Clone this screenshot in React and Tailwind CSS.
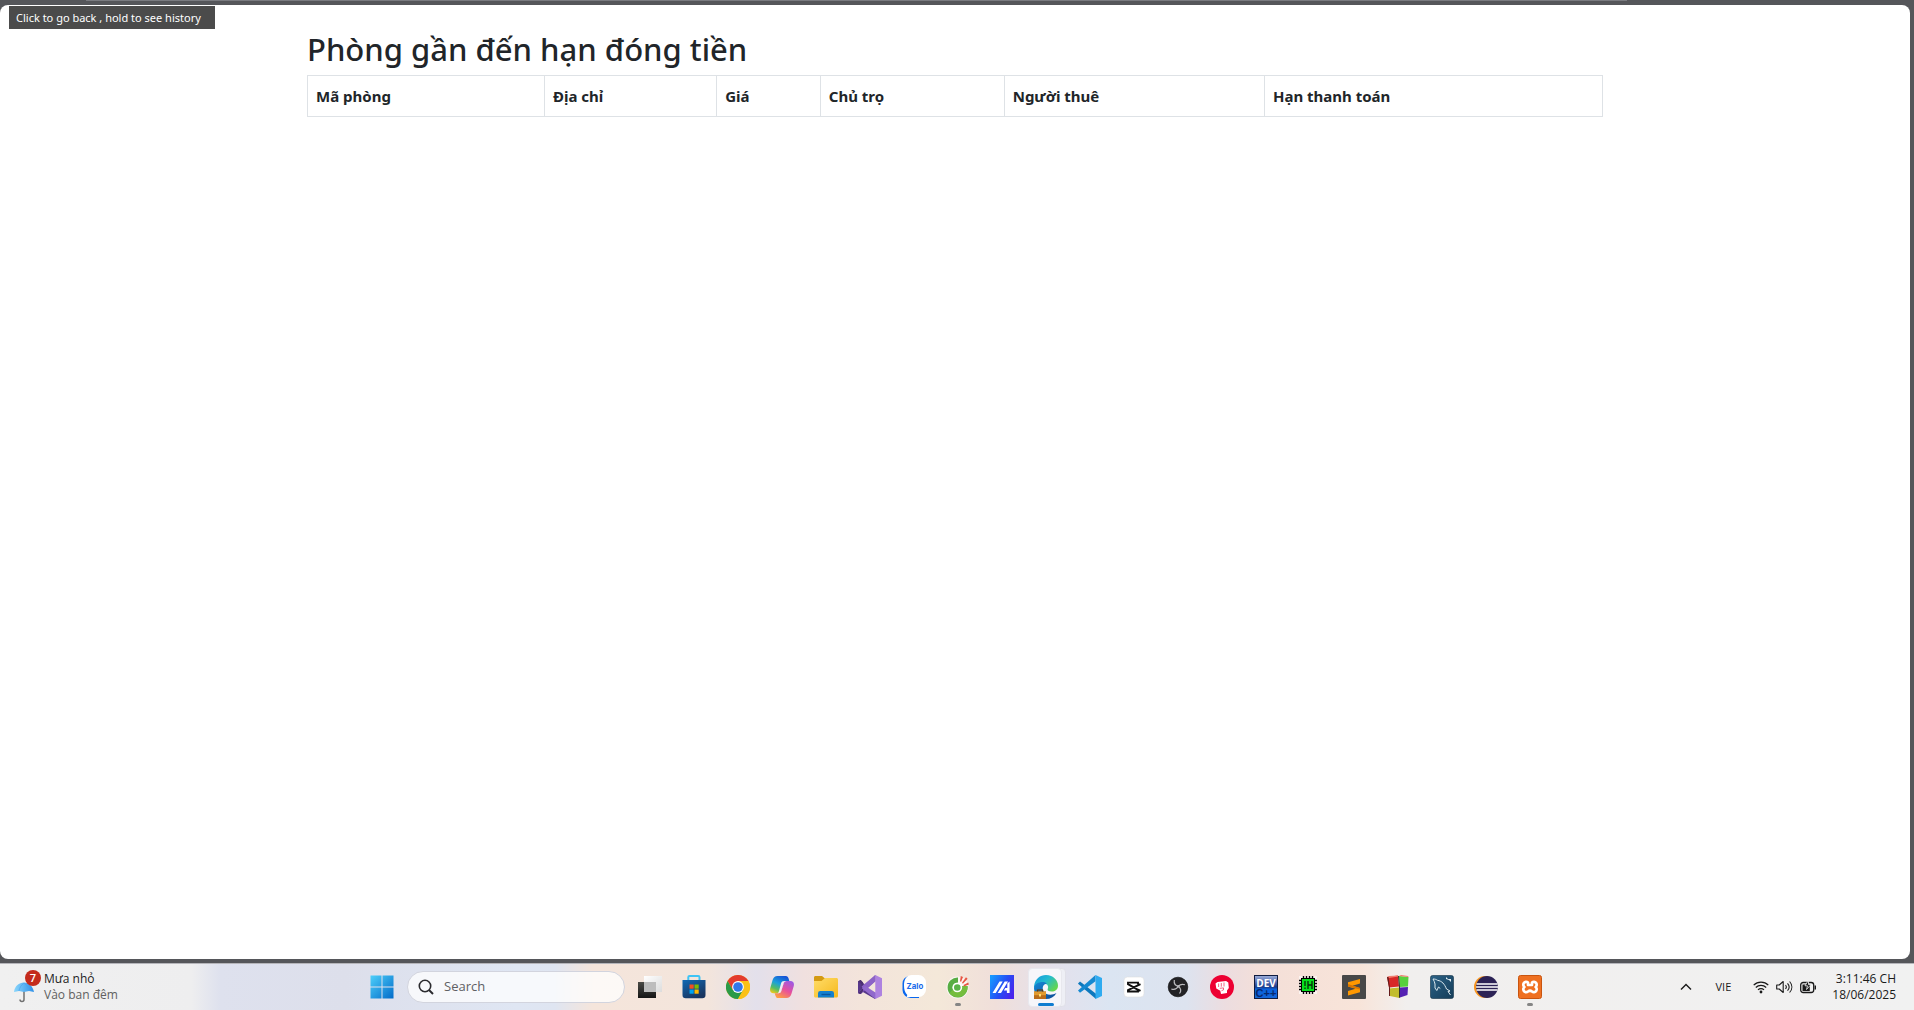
import React from "react";

const TaskViewIcon = () => (
  <svg viewBox="0 0 24 24" className="size-6">
    <defs>
      <linearGradient id="tvDark" x1="0" y1="0" x2="0" y2="1"><stop offset="0" stopColor="#4a4a46" /><stop offset="1" stopColor="#151515" /></linearGradient>
      <linearGradient id="tvLight" x1="0" y1="0" x2="1" y2="1"><stop offset="0" stopColor="#ffffff" /><stop offset="1" stopColor="#dcdcdc" /></linearGradient>
    </defs>
    <rect x="0" y="7" width="18" height="16" fill="url(#tvDark)" />
    <rect x="6" y="1" width="18" height="16" fill="url(#tvLight)" />
    <rect x="6" y="7" width="12" height="10" fill="#bdbdbd" />
  </svg>
);

const StoreIcon = () => (
  <svg viewBox="0 0 24 24" className="size-6">
    <defs><linearGradient id="store" x1="0" y1="0" x2="0.6" y2="1"><stop offset="0" stopColor="#1169b4" /><stop offset="1" stopColor="#19355f" /></linearGradient></defs>
    <path d="M6.300 6V2.300A1.300 1.300 0 0 1 7.600 1h8.600a1.300 1.300 0 0 1 1.300 1.300V6" fill="none" stroke="#3fc4f5" strokeWidth="2" />
    <path d="M.5 5h23v15a3.200 3.200 0 0 1-3.200 3.200H3.700A3.200 3.200 0 0 1 .5 20z" fill="url(#store)" />
    <rect x="7.500" y="9.500" width="4.200" height="4.200" fill="#f25022" />
    <rect x="12.500" y="9.500" width="4.200" height="4.200" fill="#7fba00" />
    <rect x="7.500" y="14.500" width="4.200" height="4.200" fill="#00a4ef" />
    <rect x="12.500" y="14.500" width="4.200" height="4.200" fill="#ffb900" />
  </svg>
);

const ChromeIcon = () => (
  <svg viewBox="0 0 24 24" className="size-6">
    <circle cx="12" cy="12" r="12" fill="#fbc116" />
    <path d="M12 6H22.400A12 12 0 0 0 1.600 6L6.800 15z" fill="#e33b2e" />
    <path d="M1.600 6A12 12 0 0 0 12 24l5.200-9H12L6.800 15z" fill="#2a9a48" />
    <path d="M22.400 6A12 12 0 0 1 12 24l5.200-9A6 6 0 0 0 12 6z" fill="#fbc116" />
    <circle cx="12" cy="12" r="5.900" fill="#fff" />
    <circle cx="12" cy="12" r="4.800" fill="#3277e8" />
  </svg>
);

const CopilotIcon = () => (
  <svg viewBox="0 0 24 24" className="size-6">
    <defs>
      <linearGradient id="cpA" x1="0.700" y1="0" x2="0.200" y2="1"><stop offset="0" stopColor="#1754d6" /><stop offset="0.450" stopColor="#1aa0dc" /><stop offset="0.750" stopColor="#55bd62" /><stop offset="1" stopColor="#ecc91c" /></linearGradient>
      <linearGradient id="cpB" x1="0.800" y1="0" x2="0.200" y2="1"><stop offset="0" stopColor="#9d59e5" /><stop offset="0.500" stopColor="#e8509b" /><stop offset="1" stopColor="#ffa23e" /></linearGradient>
    </defs>
    <path d="M7.500 1h8.400c1.500 0 2.200.9 2.700 2.600L19.300 6h-2.700c-1.700 0-2.500.9-3 2.500l-2.300 7.600c-.5 1.500-1.300 2.200-2.900 2.200H3.600c-3 0-4.100-2.400-3.300-5.200l2.300-8C3.500 2.300 5 1 7.500 1z" fill="url(#cpA)" />
    <path d="M16.500 23H8.100c-1.500 0-2.200-.9-2.700-2.600l-.7-2.100h3.700c1.600 0 2.400-.7 2.900-2.200l2.300-7.600c.5-1.600 1.300-2.500 3-2.500h3.800c3 0 4.100 2.400 3.300 5.200l-2.300 7.700c-.9 2.800-2.400 4.100-4.900 4.100z" fill="url(#cpB)" />
    <path d="M13.600 8.500c.5-1.600 1.300-2.500 3-2.500h-2.200c-1.900 0-2.800.8-3.300 2.200L9 16c-.4 1.500-.9 2.300-2.100 2.300h1.500c1.600 0 2.400-.7 2.900-2.200z" fill="#f5e7f1" />
  </svg>
);

const ExplorerIcon = () => (
  <svg viewBox="0 0 24 24" className="size-6">
    <defs><linearGradient id="folder" x1="0" y1="0" x2="1" y2="1"><stop offset="0" stopColor="#ffdc68" /><stop offset="1" stopColor="#f5b91e" /></linearGradient></defs>
    <path d="M0 6V2.500C0 1.600.6 1 1.500 1H8l3 2.500V6z" fill="#d49a12" />
    <path d="M0 6h7.500L11 3h11.500c.9 0 1.500.6 1.500 1.500V21c0 .9-.6 1.500-1.500 1.500h-21C.6 22.500 0 21.900 0 21z" fill="url(#folder)" />
    <path d="M4 22.500v-4.200A2.300 2.300 0 0 1 6.300 16h11.400a2.300 2.300 0 0 1 2.300 2.300v4.200z" fill="#1380cf" />
    <path d="M7.500 19.500h9" stroke="#07569e" strokeWidth="1.400" />
  </svg>
);

const VisualStudioIcon = () => (
  <svg viewBox="0 0 24 24" className="size-6">
    <path d="M0 6.300 2.700 5 17 21.500V24L4 16.500 1.500 19 0 18z" fill="#57378a" />
    <path d="M0 18 17.300 0v6L3 19z" fill="#7a4fb4" />
    <path d="M0 6.300 2.700 5 5 7.500V16l-2.300 3L0 18l3.500-3V9z" fill="#4b3070" />
    <path d="M17.300 0 24 3.300v17.400L17.300 24l-5.500-8 5.500 1.500V6.500z" fill="#ae82e0" />
    <path d="M17.300 0v6.500L7 15.500l-3.500-4z" fill="#8c62c7" />
    <path d="m7.500 11 9.800 6.500V24L3.500 13z" fill="#9169cc" />
  </svg>
);

const ZaloIcon = () => (
  <svg viewBox="0 0 24 24" className="size-6">
    <path d="M7 1h10v22H9a8 8 0 0 1-8.500-8V8.500A8 8 0 0 1 7 1z" fill="#0867ef" />
    <path d="M10 0h6.500A7.500 7.500 0 0 1 24 7.500v7a7.500 7.500 0 0 1-7.500 7.500H9l-4.500.5.8-2.500C2.800 17.500 2 14.500 2 10.500 2 4.500 4.500 0 10 0z" fill="#fff" />
    <text x="4.600" y="14" fontSize="7.800" fontWeight="700" fontFamily="Inter, sans-serif" fill="#1769ea">Zalo</text>
  </svg>
);

const CocCocIcon = () => (
  <svg viewBox="0 0 24 24" className="size-6">
    <circle cx="11.500" cy="12.500" r="11" fill="#fff" opacity=".65" />
    <path d="M12 2.500A10 10 0 1 0 21.500 11h-5.200A5 5 0 1 1 12 7.700z" fill="#57ad43" />
    <path d="M3.500 18A10 10 0 0 0 21.500 11h-5.200c.2 5-5.800 7-8.800 3z" fill="#75bd3d" />
    <circle cx="11.300" cy="12.500" r="4.800" fill="#fff" />
    <circle cx="11.300" cy="12.500" r="3.300" fill="#59b348" />
    <path d="m14 6 .8-5L17 2l-2 5zm2 1.800L20 2.200l1.600 1.600-4.700 5zm1.500 2.300 4.700-2.600.7 1.900-5 2z" fill="#e75542" />
  </svg>
);

const ArmouryIcon = () => (
  <svg viewBox="0 0 24 24" className="size-6">
    <defs><linearGradient id="asus" x1="0" y1="0.200" x2="1" y2="0.700"><stop offset="0" stopColor="#1798ff" /><stop offset="0.550" stopColor="#264df4" /><stop offset="1" stopColor="#4a24ec" /></linearGradient></defs>
    <path d="M0 0h24v24H0z" fill="url(#asus)" />
    <path d="M2.500 18 9.500 6.500h3.200L5.700 18zM7.700 18 14.700 6.500H18L11 18z" fill="#fff" />
    <path d="m17.300 8.500 2.300-2V18h-2.700v-2.600H13.800l1.500-2.500h2z" fill="#fff" />
  </svg>
);

const EdgeIcon = () => (
  <svg viewBox="0 0 24 24" className="size-6">
    <defs>
      <linearGradient id="edgeTop" x1="0" y1="0" x2="1" y2="0.700"><stop offset="0" stopColor="#1597df" /><stop offset="0.500" stopColor="#23bbd0" /><stop offset="1" stopColor="#65d64b" /></linearGradient>
      <linearGradient id="edgeLow" x1="0" y1="0" x2="1" y2="1"><stop offset="0" stopColor="#1689d7" /><stop offset="1" stopColor="#0c4a93" /></linearGradient>
    </defs>
    <path d="M0 11C1.500 3.500 6 0 12 0c7.500 0 12 5.500 12 10.500 0 4-3 6-6.300 6-3.200 0-4.700-1.300-4-2.500.9-1.500.8-5.500-4.200-5.500C5 8.500 1 10.500 0 14z" fill="url(#edgeTop)" />
    <path d="M0 13c.5-4 4.500-6 8.500-6 2 0 3.500.7 4.300 1.700C9 9 8 12.500 9.300 15.500c2 4.500 8 5.500 13.200 2.500C20 22 16.500 24 12 24 5 24 0 19 0 13z" fill="url(#edgeLow)" />
    <path d="M0 16.500h12V24H0z" fill="#b96c18" />
    <path d="M0 16.500h12v3.700H0z" fill="#e19a2e" />
    <path d="M3.500 16.500V15h5v1.500" fill="none" stroke="#65390b" strokeWidth="1.200" />
    <path d="M5 19h2v2.500H5z" fill="#ffdf72" />
  </svg>
);

const VSCodeIcon = () => (
  <svg viewBox="0 0 24 24" className="size-6">
    <path d="M0 8.500 2 6.500 18 18.800V24L.3 9z" fill="#0d78bd" />
    <path d="M0 15.500 17.500 0v6.300L2 17.800z" fill="#1689d1" />
    <path d="M17.500 0 24 3v18l-6.500 3z" fill="#2fabf0" />
  </svg>
);

const CapCutIcon = () => (
  <svg viewBox="0 0 24 24" className="size-6">
    <rect x="2" y="2" width="20" height="20" rx="3.500" fill="#fff" stroke="#dedede" strokeWidth=".6" />
    <path d="M18.500 9.200 6 15.200v1.300h10v-1.700L6 9.200V7.600h10v1.600M16 14.500l2.500 1.400" fill="none" stroke="#101010" strokeWidth="1.900" />
  </svg>
);

const ObsIcon = () => (
  <svg viewBox="0 0 24 24" className="size-6">
    <circle cx="12" cy="12" r="9.800" fill="#232326" stroke="#111" strokeWidth=".7" />
    <path d="M8.300 5c-.5 3.300.8 5.600 4 6.300M19 9.800c-2.800-1-5-.5-6.700 1.500M13.500 18.500c1.800-2.300 1.500-5-1.200-7.200M12.300 11.300c-1.600 3-3.900 3.800-7 2.700" fill="none" stroke="#b9b9bc" strokeWidth="1.200" />
    <circle cx="12.300" cy="11.300" r="1.200" fill="#b9b9bc" />
  </svg>
);

const FistIcon = () => (
  <svg viewBox="0 0 24 24" className="size-6">
    <circle cx="12" cy="12" r="12" fill="#ed0032" />
    <path d="M5.500 8.500 7.500 7l8.500-1 2.300 1.500.5 5.500-1.800 2.500V18l-6 1-.7-3.200-4-2.300z" fill="#fff" />
    <path d="M8.600 8.500v3.500m2.700-4v3.700m2.700-4.200v4m-4.200 1.800 3.700-.4v2l-2 .8" stroke="#ed0032" strokeWidth=".6" fill="none" />
  </svg>
);

const DevCppIcon = () => (
  <svg viewBox="0 0 24 24" className="size-6">
    <defs><linearGradient id="dev" x1="0" y1="0" x2="0" y2="1"><stop offset="0" stopColor="#9fb0da" /><stop offset="0.350" stopColor="#3f5aa5" /><stop offset="0.500" stopColor="#1c3a86" /><stop offset="0.600" stopColor="#0a62dd" /><stop offset="1" stopColor="#1465d8" /></linearGradient></defs>
    <rect x=".5" y=".5" width="23" height="23" fill="url(#dev)" stroke="#101c40" />
    <text x="12" y="11.500" textAnchor="middle" fontSize="10" fontWeight="700" fontFamily="Open Sans, sans-serif" fill="#fff">DEV</text>
    <text x="12" y="21.500" textAnchor="middle" fontSize="11" fontWeight="700" fontFamily="Liberation Sans, sans-serif" fill="#07276c">C++</text>
  </svg>
);

const ChipIcon = () => (
  <svg viewBox="0 0 24 24" className="size-6">
    <path d="M1 1h18v18H1z" fill="#fff" opacity=".6" />
    <path d="M5.500 1v18M8.500 1v18M11.500 1v18M14.500 1v18M1 5.500h18M1 8.500h18M1 11.500h18M1 14.500h18" stroke="#000" strokeWidth="1.400" />
    <path d="M3 3h14v14H3z" fill="#000" />
    <path d="M4 4h12v12H4z" fill="#06df1c" />
    <path d="M7 6v5m0 1.500V14M10 6v8M14 6v8M10 10h4" stroke="#052d08" strokeWidth="1.300" />
  </svg>
);

const SublimeIcon = () => (
  <svg viewBox="0 0 24 24" className="size-6">
    <rect width="24" height="24" rx="1" fill="#484848" />
    <path d="M18 4v4.500l-7.500 2.300L18 13v4.300L6 20.500V16l7.500-2.300L6 11.500V7.300z" fill="#ff9800" />
    <path d="m6 9 12 4v1.500L6 11.500z" fill="#d87500" />
  </svg>
);

const CodeBlocksIcon = () => (
  <svg viewBox="0 0 24 24" className="size-6">
    <path d="m1 2 11-1.500 1 11L3 12.500z" fill="#d82727" />
    <path d="m13 1 9.500 1-.5 9.500-8.500.5z" fill="#57cf3e" />
    <path d="m3 13.500 10-1 .5 10.500L4 21z" fill="#c2bd2d" />
    <path d="m14 12.500 8-.5-.5 8-7.500 2.500z" fill="#5420b2" />
    <path d="M1 2 3 1l9-.5.5 1L3 3zM13 1l2-1 7 1 .5 1z" fill="#f07b6d" />
    <path d="m1 2 2 10.500V21h1v-8L2.500 2z" fill="#641b1b" />
    <path d="M12 1h1l1 11v10.500l-1 .5V12z" fill="#303030" />
  </svg>
);

const MySqlIcon = () => (
  <svg viewBox="0 0 24 24" className="size-6">
    <defs><linearGradient id="mysql" x1="0" y1="0" x2="1" y2="1"><stop offset="0" stopColor="#2d6286" /><stop offset="1" stopColor="#143c58" /></linearGradient></defs>
    <rect x=".5" y=".5" width="23" height="23" rx="2" fill="url(#mysql)" stroke="#102f45" strokeWidth=".6" />
    <path d="M3 4c2 0 3 .3 4.500 1.300C12 6 14.500 9 16.500 14l3.500 2-2 .5 2.500 3.500M3 4c1 1.500 1.500 3 2 5v4l1.800 2.500L8.500 12l1.800 1.500" fill="none" stroke="#dce8ee" strokeWidth="1" />
    <path d="m16 2 2 2h3v3l-2-2-3-1z" fill="#e3eef3" />
  </svg>
);

const EclipseIcon = () => (
  <svg viewBox="0 0 24 24" className="size-6">
    <circle cx="11" cy="12" r="11" fill="#f7941e" />
    <circle cx="13" cy="12" r="10.900" fill="#2c2255" />
    <path d="M2.500 9h21M2.100 12H24M2.500 15h21" stroke="#fff" strokeWidth="1.300" />
  </svg>
);

const XamppIcon = () => (
  <svg viewBox="0 0 24 24" className="size-6">
    <rect x=".5" y=".5" width="23" height="23" rx="2" fill="#ef7021" stroke="#c9540f" />
    <path d="M10 7.500a2.800 2.800 0 1 0-3.600 4.500A2.800 2.800 0 1 0 10 16.500q2-1.500 4 0a2.800 2.800 0 1 0 3.600-4.500A2.800 2.800 0 1 0 14 7.500v2.500h-4z" fill="none" stroke="#fff" strokeWidth="2.700" strokeLinejoin="round" />
  </svg>
);

const apps = [
  { name: "Task view", Icon: TaskViewIcon },
  { name: "Microsoft Store", Icon: StoreIcon },
  { name: "Google Chrome", Icon: ChromeIcon },
  { name: "Copilot", Icon: CopilotIcon },
  { name: "File Explorer", Icon: ExplorerIcon },
  { name: "Visual Studio", Icon: VisualStudioIcon },
  { name: "Zalo", Icon: ZaloIcon },
  { name: "Cốc Cốc", Icon: CocCocIcon, open: true },
  { name: "MyASUS", Icon: ArmouryIcon },
  { name: "Microsoft Edge", Icon: EdgeIcon, active: true },
  { name: "Visual Studio Code", Icon: VSCodeIcon },
  { name: "CapCut", Icon: CapCutIcon },
  { name: "OBS Studio", Icon: ObsIcon },
  { name: "Fist", Icon: FistIcon },
  { name: "Dev-C++", Icon: DevCppIcon },
  { name: "Chip", Icon: ChipIcon },
  { name: "Sublime Text", Icon: SublimeIcon },
  { name: "Code::Blocks", Icon: CodeBlocksIcon },
  { name: "MySQL Workbench", Icon: MySqlIcon },
  { name: "Eclipse", Icon: EclipseIcon },
  { name: "XAMPP", Icon: XamppIcon, open: true },
];

const columns = [
  { label: "Mã phòng", width: "w-[18.3%]" },
  { label: "Địa chỉ", width: "w-[13.3%]" },
  { label: "Giá", width: "w-[8%]" },
  { label: "Chủ trọ", width: "w-[14.2%]" },
  { label: "Người thuê", width: "w-[20.1%]" },
  { label: "Hạn thanh toán", width: "w-[26.1%]" },
];

function AppButton({ name, Icon, open, active }) {
  return (
    <button type="button" aria-label={name} className="relative flex h-full w-11 items-center justify-center">
      {active && (
        <>
          <span className="absolute top-1 left-1.5 h-[39px] w-9 rounded border border-[#e0e0e8] bg-[#eeeff5]" />
          <span className="absolute top-1 left-1 h-[39px] w-[34px] rounded border border-[#e8e8ee] bg-[#f6f6fa]" />
        </>
      )}
      <span className="relative"><Icon /></span>
      {open && <span className="absolute bottom-1 h-[3px] w-1.5 rounded-full bg-[#858585]" />}
      {active && <span className="absolute bottom-1 h-[3px] w-4 rounded-full bg-[#0f7cd0]" />}
    </button>
  );
}

function Taskbar() {
  return (
    <footer className="grid h-[47px] shrink-0 grid-cols-[1fr_auto_1fr] border-t border-[#b5b5ba] bg-[linear-gradient(90deg,#f0f0f0_0%,#eeeeef_10%,#dee1ee_11.5%,#dddfeb_18%,#dfe6f3_27%,#dfe5f1_29%,#f5e5db_31%,#f3e5dc_37%,#e3e0eb_39.5%,#f0e0df_42%,#f3e4db_45%,#f4e8d9_49%,#f0dfda_52%,#e4e1ec_55%,#dbe5f2_58%,#dde3ef_62%,#ecdde0_64%,#f4dfd8_66%,#f8e4d9_71%,#f1efee_73.5%,#f1f1f1_100%)] pr-0.5 font-['Open_Sans','Noto_Sans',sans-serif]">
      <button type="button" className="flex items-center gap-1 pl-3.5 text-left">
        <span className="relative size-[26px]">
          <svg viewBox="0 0 26 30" className="h-[30px] w-[26px]">
            <defs><linearGradient id="umbrella" x1="0" x2="1"><stop offset="0" stopColor="#8ad6fb" /><stop offset="1" stopColor="#2e90e8" /></linearGradient></defs>
            <path d="M10 15v10.500a2 2 0 0 1-4 0" fill="none" stroke="#707070" strokeWidth="1.500" />
            <path d="M0 18c.8-6 5-9.500 10-9.500s9 4 10 9.500l-5-1-5 1-5-1z" fill="url(#umbrella)" />
            <path d="M5 17c.5-3 2-6 5-8 3 2 4.500 5 5 8" fill="none" stroke="#4aa4ee" strokeWidth=".7" />
          </svg>
          <span className="absolute -top-1 -right-px flex size-4 items-center justify-center rounded-full bg-[#c42b1c] text-[11px] font-semibold text-white">7</span>
        </span>
        <span className="text-xs leading-4 text-[#1d1d1d]">
          <span className="block">Mưa nhỏ</span>
          <span className="block text-[#606060]">Vào ban đêm</span>
        </span>
      </button>
      <nav className="flex items-center" aria-label="Taskbar">
        <button type="button" aria-label="Start" className="flex h-full w-11 items-center justify-center">
          <svg viewBox="0 0 24 24" className="size-6">
            <defs><linearGradient id="start" x1="0" y1="0" x2="24" y2="24" gradientUnits="userSpaceOnUse"><stop offset="0" stopColor="#4fd1fb" /><stop offset="1" stopColor="#0069c8" /></linearGradient></defs>
            <path d="M.5.500h11v11H.5zM12.500.500h11v11h-11zM.5 12.500h11v11H.5zM12.500 12.500h11v11h-11z" fill="url(#start)" />
          </svg>
        </button>
        <label className="mx-[3px] flex h-8 w-[218px] items-center gap-2.5 rounded-full border border-[#d2d4de] bg-white/75 pl-2.5">
          <svg viewBox="0 0 16 16" className="size-4 shrink-0">
            <circle cx="7" cy="7" r="5.700" fill="none" stroke="#2a2a2e" strokeWidth="1.600" />
            <path d="m11 11 4 4" stroke="#2a2a2e" strokeWidth="2" />
          </svg>
          <input type="text" aria-label="Search" placeholder="Search" className="w-full min-w-0 bg-transparent text-[13px] text-[#606064] outline-none placeholder:text-[#606064]" />
        </label>
        {apps.map((app) => <AppButton key={app.name} {...app} />)}
      </nav>
      <div className="flex items-center justify-end pr-4 text-[#1a1a1a]">
        <button type="button" aria-label="Show hidden icons" className="mr-6">
          <svg viewBox="0 0 12 12" className="size-3"><path d="m1 8.500 5-5 5 5" fill="none" stroke="currentColor" strokeWidth="1.400" /></svg>
        </button>
        <button type="button" className="mr-[22px] text-[11px]">VIE</button>
        <button type="button" aria-label="Network, volume and battery" className="mr-4 flex items-center gap-[7px]">
          <svg viewBox="0 0 16 14" className="h-3.5 w-4">
            <path d="M.7 5.200a10.300 10.300 0 0 1 14.600 0M2.800 7.500a7.400 7.400 0 0 1 10.400 0M5 9.800a4.200 4.200 0 0 1 6 0" fill="none" stroke="currentColor" strokeWidth="1.200" />
            <circle cx="8" cy="12" r="1.400" fill="currentColor" />
          </svg>
          <svg viewBox="0 0 17 14" className="h-3.5 w-[17px]">
            <path d="M.7 5v4h2.500l4 3.500v-11L3.200 5z" fill="none" stroke="currentColor" strokeWidth="1.100" strokeLinejoin="round" />
            <path d="M9.500 5c1 1.200 1 2.800 0 4M11.500 3.300c2 2.200 2 5.200 0 7.400M13.600 1.500c3 3.300 3 7.700 0 11" fill="none" stroke="currentColor" strokeWidth="1.100" />
          </svg>
          <svg viewBox="0 0 16 14" className="h-3.5 w-4">
            <rect x=".7" y="2.500" width="13" height="10" rx="2.500" fill="none" stroke="currentColor" strokeWidth="1.300" />
            <path d="M15.300 5.500v4" stroke="currentColor" strokeWidth="1.400" />
            <path d="M2.500 4.500h7.300V11H2.500z" fill="currentColor" />
            <path d="M8.500 0 5 5.800h2.500L6.500 9.500 11 4.500H8.500z" fill="#1a1a1a" stroke="#f1f1f1" strokeWidth=".8" />
          </svg>
        </button>
        <button type="button" className="text-right text-xs leading-4">
          <time className="block">3:11:46 CH</time>
          <time className="block">18/06/2025</time>
        </button>
      </div>
    </footer>
  );
}

export default function App() {
  return (
    <div className="flex h-screen flex-col bg-[#55565a]">
      <div className="mr-[15%] ml-[4.5%] h-px shrink-0 bg-[#7a7b80]" />
      <div className="relative mt-1 mr-1 mb-1 min-h-0 grow rounded-lg bg-white">
        <div role="tooltip" className="absolute top-px left-[9px] min-w-[206px] bg-[#4b4b4b] px-[7px] py-1 font-['Noto_Sans',sans-serif] text-[11px] leading-[15px] text-white">
          Click to go back , hold to see history
        </div>
        <main className="mx-auto max-w-[1320px] px-3 pt-[25px] font-['Noto_Sans',sans-serif] text-[#212529]">
          <h2 className="mb-2 text-[31px] leading-[38px] font-medium">Phòng gần đến hạn đóng tiền</h2>
          <table className="-mt-px w-full table-fixed border-collapse text-left text-[15px] leading-6">
            <thead>
              <tr>
                {columns.map((column) => (
                  <th key={column.label} scope="col" className={`border border-[#dee2e6] p-2 font-bold ${column.width}`}>{column.label}</th>
                ))}
              </tr>
            </thead>
          </table>
        </main>
      </div>
      <Taskbar />
    </div>
  );
}
